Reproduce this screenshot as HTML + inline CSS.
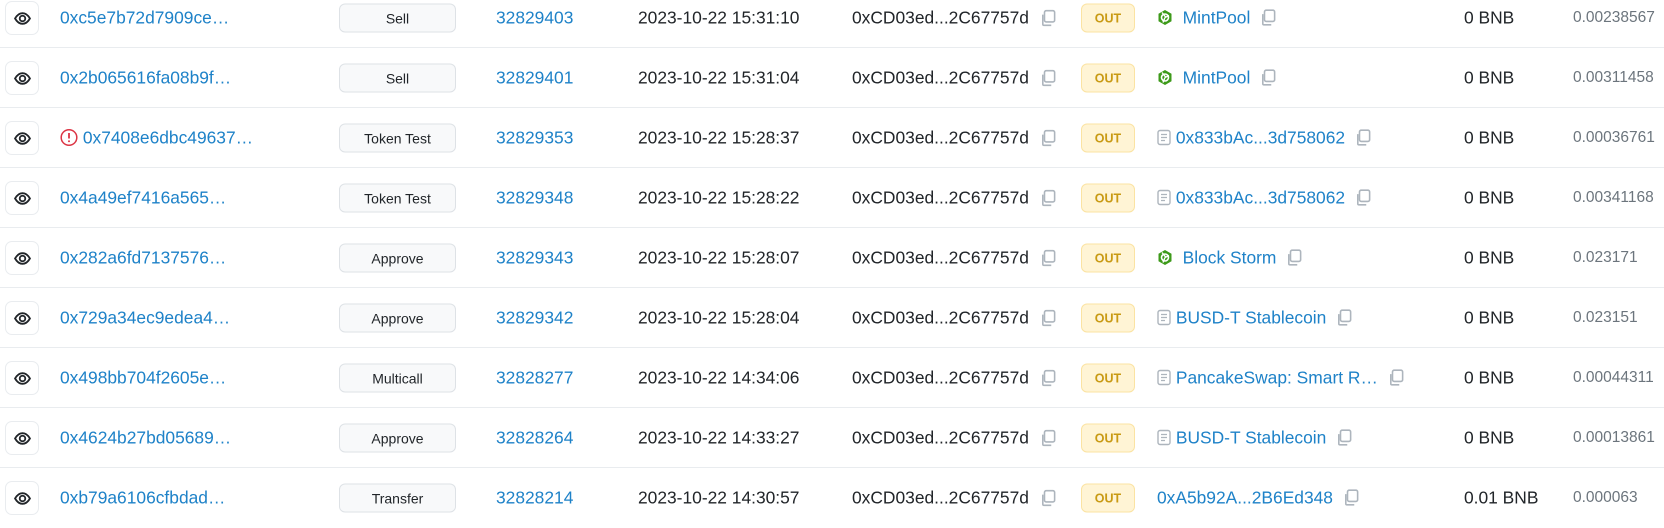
<!DOCTYPE html>
<html><head><meta charset="utf-8"><style>
*{margin:0;padding:0;box-sizing:border-box}
body{width:1664px;height:515px;overflow:hidden;background:#fff;font-family:"Liberation Sans",sans-serif;font-size:17.4px;color:#212529;position:relative}
.r{position:absolute;left:0;width:1664px;height:60px}
.r .ln{position:absolute;left:0;right:0;bottom:0;height:1px;background:#e9ecef}
.r>*{position:absolute;top:50%;transform:translateY(-50%);white-space:nowrap}
.eye{left:5px;width:34px;height:34px;border:1px solid #e9ecef;border-radius:7px;display:flex;align-items:center;justify-content:center}
.a{color:#1e82c8}
.h{left:60px}
.m{left:339px;width:117px;height:29px;border:1px solid #dee2e6;border-radius:6px;background:#f8f9fa;font-size:14px;display:flex;align-items:center;justify-content:center;color:#212529}
.b{left:496px}
.d{left:638px}
.f{left:852px}
.c1{left:1040px}
.o{left:1081px;width:54px;height:29px;border:1px solid #fbe3a2;background:#fff4d5;border-radius:6px;color:#c99a14;font-size:12.5px;font-weight:bold;display:flex;align-items:center;justify-content:center}
.ti{left:1157px}
.v{left:1464px}
.fee{left:1573px;color:#6c757d;font-size:15.5px}
.cp{width:18px;height:18px}
.ey{width:17px;height:17px}
</style></head><body>
<svg width="0" height="0" style="position:absolute">
<defs>
<symbol id="cp" viewBox="0 0 16 16"><path d="M5.5 1.5h6a1.5 1.5 0 0 1 1.5 1.5v7a1.5 1.5 0 0 1-1.5 1.5h-6A1.5 1.5 0 0 1 4 10V3a1.5 1.5 0 0 1 1.5-1.5z" fill="none" stroke="#adb5bd" stroke-width="1.4"/><path d="M2.5 5v8.5a1 1 0 0 0 1 1H10" fill="none" stroke="#adb5bd" stroke-width="1.4"/></symbol>
<symbol id="eye" viewBox="0 0 16 16"><path d="M1 8c2-3.5 4.5-5 7-5s5 1.5 7 5c-2 3.5-4.5 5-7 5S3 11.5 1 8z" fill="none" stroke="#212529" stroke-width="1.7"/><circle cx="8" cy="8" r="2.6" fill="none" stroke="#212529" stroke-width="1.7"/></symbol>
<symbol id="doc" viewBox="0 0 14 16"><rect x="1" y="1" width="12" height="14" rx="2" fill="none" stroke="#adb5bd" stroke-width="1.4"/><path d="M4 5h6M4 8h6M4 11h4" stroke="#adb5bd" stroke-width="1.3"/></symbol>
<symbol id="gr" viewBox="0 0 16 16"><path d="M8 0.5l6.5 3.75v7.5L8 15.5 1.5 11.75v-7.5z" fill="#3d9a1a"/><circle cx="8" cy="8" r="3.5" fill="none" stroke="#fff" stroke-width="1.6"/><path d="M5 3l4 5M12 6l-4 2M6 13l2-5" stroke="#fff" stroke-width="1.4"/></symbol>
</defs></svg>

<div class="r" style="top:-12px"><div class="eye"><svg class="ey"><use href="#eye"/></svg></div><span class="h a">0xc5e7b72d7909ce…</span><span class="m">Sell</span><span class="b a">32829403</span><span class="d">2023-10-22 15:31:10</span><span class="f">0xCD03ed...2C67757d</span><svg class="cp c1"><use href="#cp"/></svg><span class="o">OUT</span><span class="ti"><svg width="16" height="16" style="vertical-align:-2px"><use href="#gr"/></svg> <span class="a">&nbsp;MintPool</span>&nbsp; <svg class="cp" style="vertical-align:-3px"><use href="#cp"/></svg></span><span class="v">0 BNB</span><span class="fee">0.00238567</span><div class="ln" style="transform:none;top:auto"></div></div>

<div class="r" style="top:48px"><div class="eye"><svg class="ey"><use href="#eye"/></svg></div><span class="h a">0x2b065616fa08b9f…</span><span class="m">Sell</span><span class="b a">32829401</span><span class="d">2023-10-22 15:31:04</span><span class="f">0xCD03ed...2C67757d</span><svg class="cp c1"><use href="#cp"/></svg><span class="o">OUT</span><span class="ti"><svg width="16" height="16" style="vertical-align:-2px"><use href="#gr"/></svg> <span class="a">&nbsp;MintPool</span>&nbsp; <svg class="cp" style="vertical-align:-3px"><use href="#cp"/></svg></span><span class="v">0 BNB</span><span class="fee">0.00311458</span><div class="ln" style="transform:none;top:auto"></div></div>

<div class="r" style="top:108px"><div class="eye"><svg class="ey"><use href="#eye"/></svg></div><span class="h"><svg width="18" height="18" viewBox="0 0 18 18" style="vertical-align:-3px"><circle cx="9" cy="9" r="7.8" fill="none" stroke="#dc3545" stroke-width="1.5"/><path d="M9 4.5v5.5" stroke="#dc3545" stroke-width="1.8"/><circle cx="9" cy="12.8" r="1" fill="#dc3545"/></svg> <span class="a">0x7408e6dbc49637…</span></span><span class="m">Token Test</span><span class="b a">32829353</span><span class="d">2023-10-22 15:28:37</span><span class="f">0xCD03ed...2C67757d</span><svg class="cp c1"><use href="#cp"/></svg><span class="o">OUT</span><span class="ti"><svg width="14" height="16" style="vertical-align:-2px"><use href="#doc"/></svg> <span class="a">0x833bAc...3d758062</span>&nbsp; <svg class="cp" style="vertical-align:-3px"><use href="#cp"/></svg></span><span class="v">0 BNB</span><span class="fee">0.00036761</span><div class="ln" style="transform:none;top:auto"></div></div>

<div class="r" style="top:168px"><div class="eye"><svg class="ey"><use href="#eye"/></svg></div><span class="h a">0x4a49ef7416a565…</span><span class="m">Token Test</span><span class="b a">32829348</span><span class="d">2023-10-22 15:28:22</span><span class="f">0xCD03ed...2C67757d</span><svg class="cp c1"><use href="#cp"/></svg><span class="o">OUT</span><span class="ti"><svg width="14" height="16" style="vertical-align:-2px"><use href="#doc"/></svg> <span class="a">0x833bAc...3d758062</span>&nbsp; <svg class="cp" style="vertical-align:-3px"><use href="#cp"/></svg></span><span class="v">0 BNB</span><span class="fee">0.00341168</span><div class="ln" style="transform:none;top:auto"></div></div>

<div class="r" style="top:228px"><div class="eye"><svg class="ey"><use href="#eye"/></svg></div><span class="h a">0x282a6fd7137576…</span><span class="m">Approve</span><span class="b a">32829343</span><span class="d">2023-10-22 15:28:07</span><span class="f">0xCD03ed...2C67757d</span><svg class="cp c1"><use href="#cp"/></svg><span class="o">OUT</span><span class="ti"><svg width="16" height="16" style="vertical-align:-2px"><use href="#gr"/></svg> <span class="a">&nbsp;Block Storm</span>&nbsp; <svg class="cp" style="vertical-align:-3px"><use href="#cp"/></svg></span><span class="v">0 BNB</span><span class="fee">0.023171</span><div class="ln" style="transform:none;top:auto"></div></div>

<div class="r" style="top:288px"><div class="eye"><svg class="ey"><use href="#eye"/></svg></div><span class="h a">0x729a34ec9edea4…</span><span class="m">Approve</span><span class="b a">32829342</span><span class="d">2023-10-22 15:28:04</span><span class="f">0xCD03ed...2C67757d</span><svg class="cp c1"><use href="#cp"/></svg><span class="o">OUT</span><span class="ti"><svg width="14" height="16" style="vertical-align:-2px"><use href="#doc"/></svg> <span class="a">BUSD-T Stablecoin</span>&nbsp; <svg class="cp" style="vertical-align:-3px"><use href="#cp"/></svg></span><span class="v">0 BNB</span><span class="fee">0.023151</span><div class="ln" style="transform:none;top:auto"></div></div>

<div class="r" style="top:348px"><div class="eye"><svg class="ey"><use href="#eye"/></svg></div><span class="h a">0x498bb704f2605e…</span><span class="m">Multicall</span><span class="b a">32828277</span><span class="d">2023-10-22 14:34:06</span><span class="f">0xCD03ed...2C67757d</span><svg class="cp c1"><use href="#cp"/></svg><span class="o">OUT</span><span class="ti"><svg width="14" height="16" style="vertical-align:-2px"><use href="#doc"/></svg> <span class="a">PancakeSwap: Smart R…</span>&nbsp; <svg class="cp" style="vertical-align:-3px"><use href="#cp"/></svg></span><span class="v">0 BNB</span><span class="fee">0.00044311</span><div class="ln" style="transform:none;top:auto"></div></div>

<div class="r" style="top:408px"><div class="eye"><svg class="ey"><use href="#eye"/></svg></div><span class="h a">0x4624b27bd05689…</span><span class="m">Approve</span><span class="b a">32828264</span><span class="d">2023-10-22 14:33:27</span><span class="f">0xCD03ed...2C67757d</span><svg class="cp c1"><use href="#cp"/></svg><span class="o">OUT</span><span class="ti"><svg width="14" height="16" style="vertical-align:-2px"><use href="#doc"/></svg> <span class="a">BUSD-T Stablecoin</span>&nbsp; <svg class="cp" style="vertical-align:-3px"><use href="#cp"/></svg></span><span class="v">0 BNB</span><span class="fee">0.00013861</span><div class="ln" style="transform:none;top:auto"></div></div>

<div class="r" style="top:468px"><div class="eye"><svg class="ey"><use href="#eye"/></svg></div><span class="h a">0xb79a6106cfbdad…</span><span class="m">Transfer</span><span class="b a">32828214</span><span class="d">2023-10-22 14:30:57</span><span class="f">0xCD03ed...2C67757d</span><svg class="cp c1"><use href="#cp"/></svg><span class="o">OUT</span><span class="ti"><span class="a">0xA5b92A...2B6Ed348</span>&nbsp; <svg class="cp" style="vertical-align:-3px"><use href="#cp"/></svg></span><span class="v">0.01 BNB</span><span class="fee">0.000063</span></div>
</body></html>
